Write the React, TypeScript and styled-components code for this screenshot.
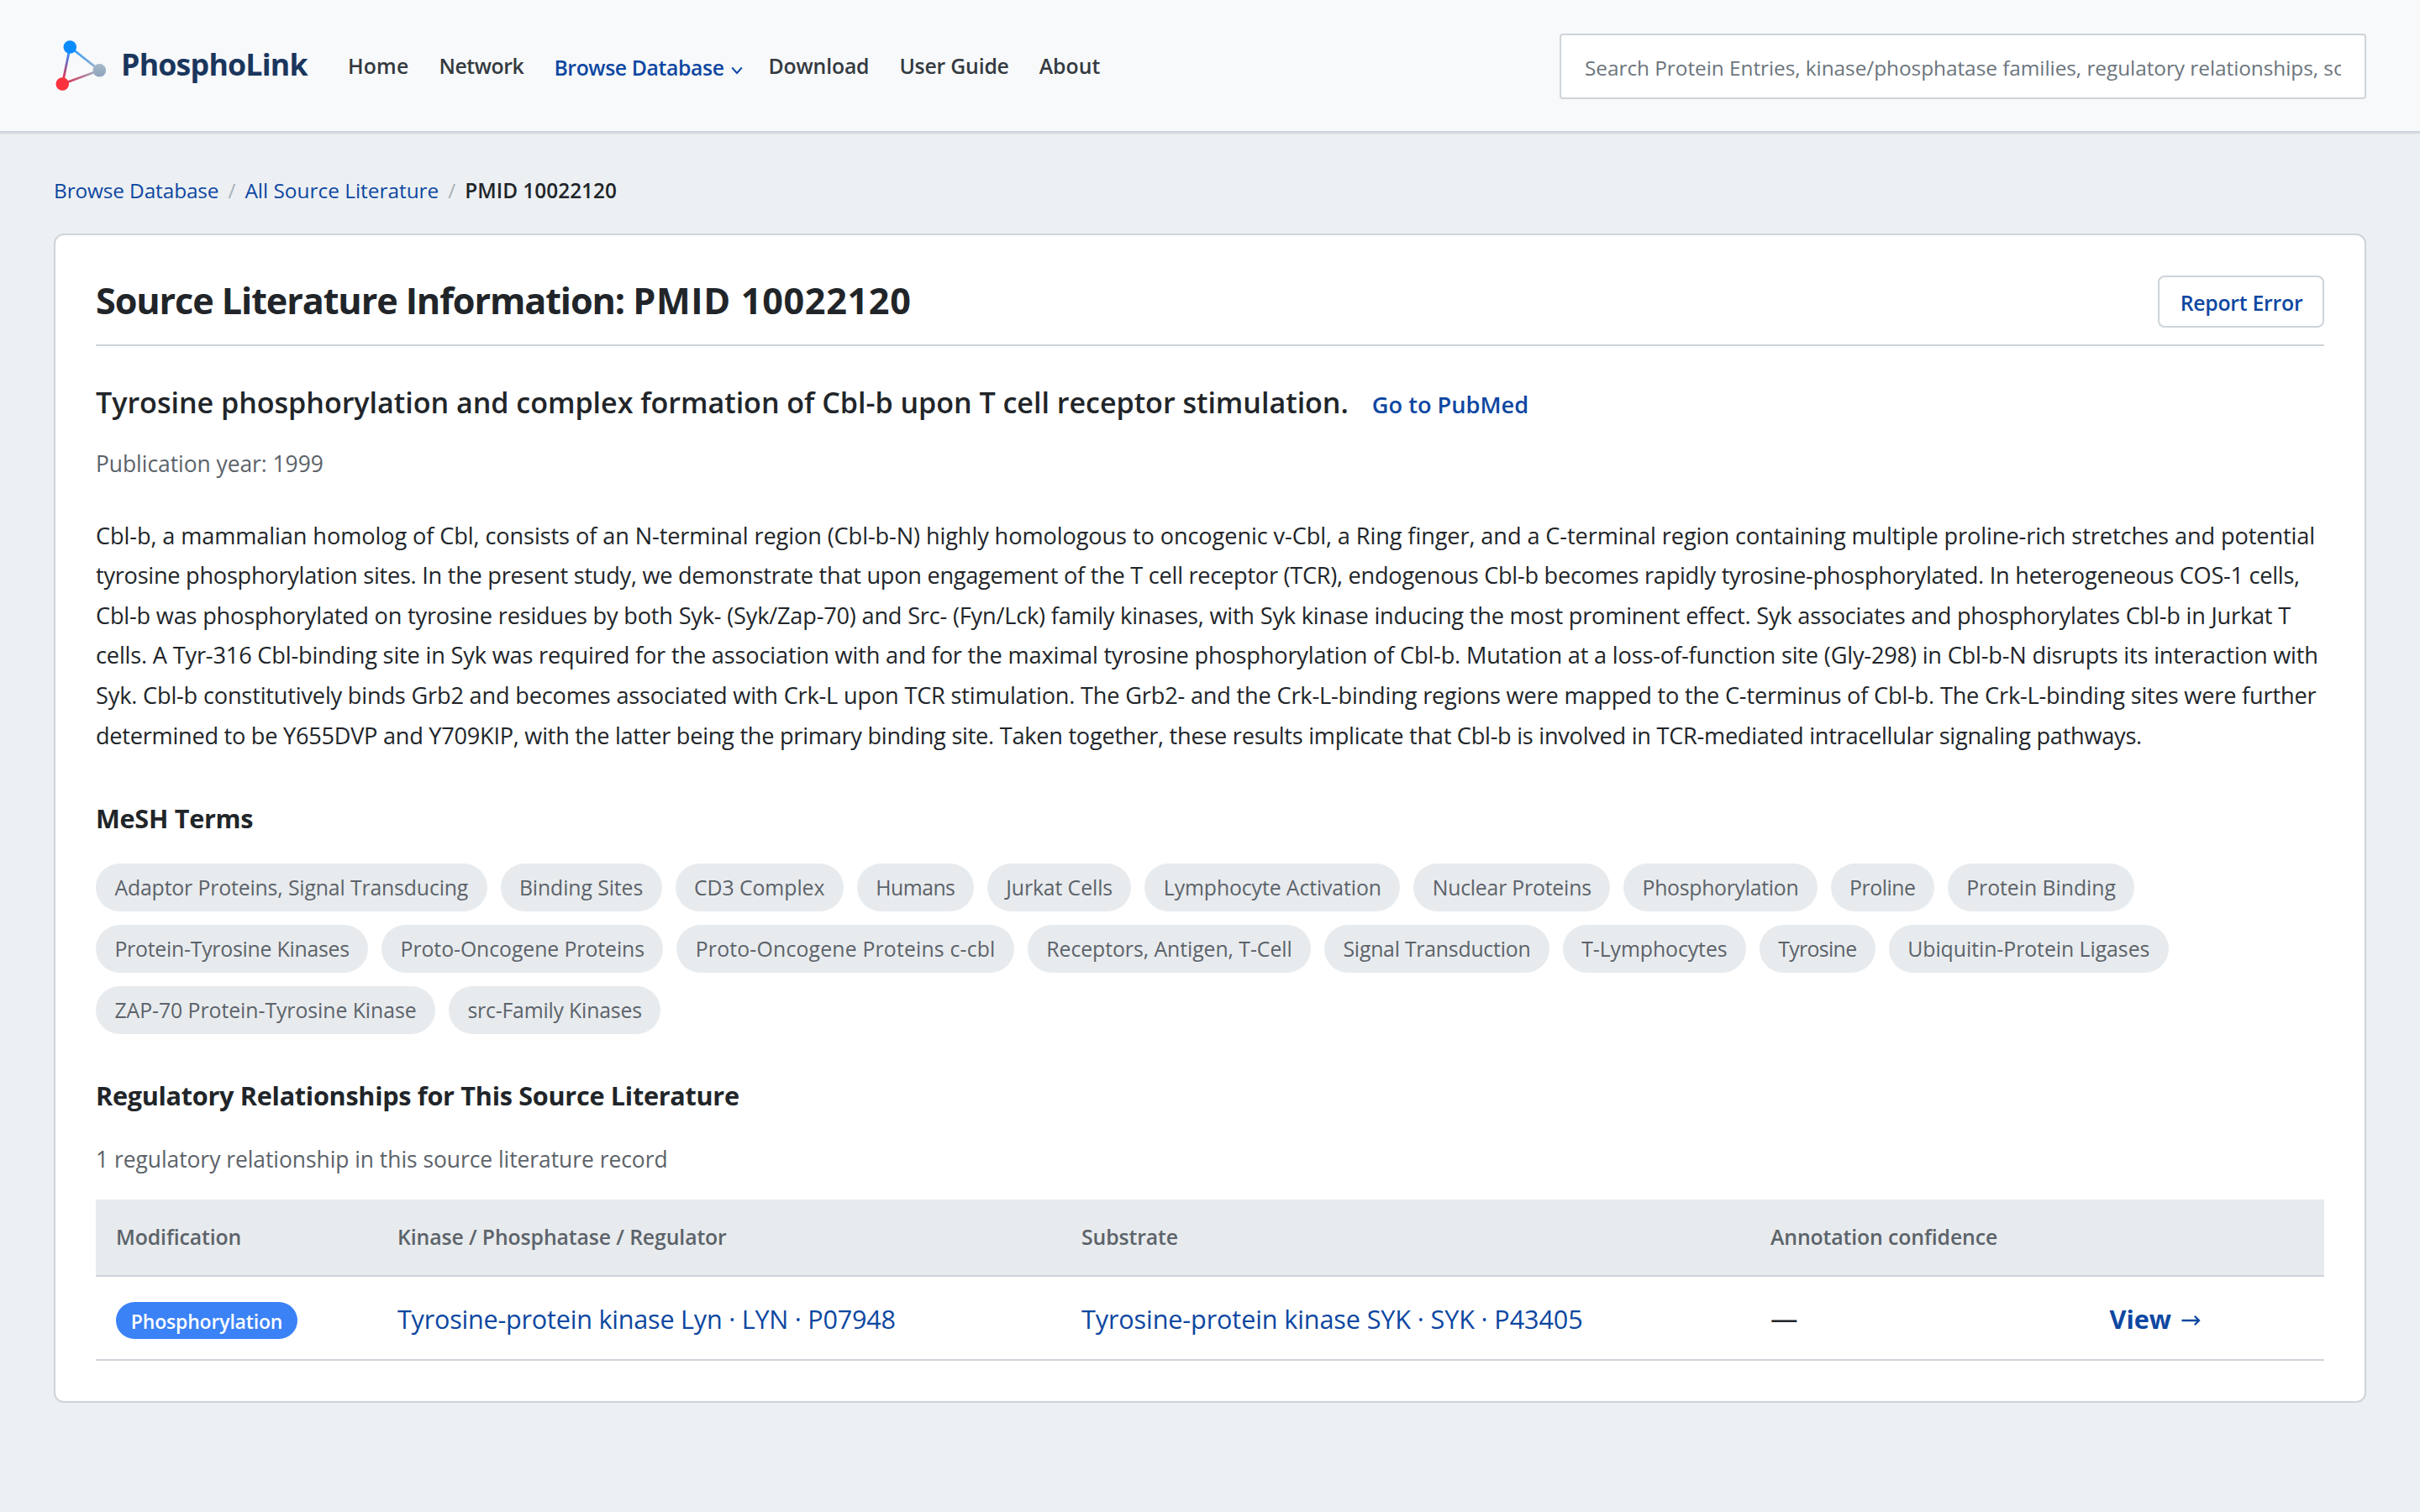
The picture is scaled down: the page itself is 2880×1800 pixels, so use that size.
import React from 'react';
import styled, { createGlobalStyle } from 'styled-components';

const color = {
  page: '#ecf0f3',
  surface: '#ffffff',
  header: '#f8f9fb',
  border: '#ced4da',
  ink: '#212529',
  nav: '#343a40',
  muted: '#5c636a',
  faint: '#a9b0b7',
  placeholder: '#6c757d',
  link: '#0d47a1',
  brand: '#1a365d',
  tint: '#e8ebee',
  phospho: '#3b82f6',
};

const GlobalStyle = createGlobalStyle`
  *, *::before, *::after { box-sizing: border-box; }
  body {
    margin: 0;
    min-height: 100vh;
    background: ${color.page};
    color: ${color.ink};
    font-family: "Open Sans", "Noto Sans", sans-serif;
  }
  h1, h2, h3, p { margin: 0; }
  a { color: ${color.link}; text-decoration: none; }
`;

const Header = styled.header`
  display: flex;
  align-items: center;
  height: 158px;
  padding: 0 64px;
  background: ${color.header};
  border-bottom: 2px solid ${color.border};
  box-shadow: 0 2px 0 rgba(0, 0, 0, 0.05);
`;

const Brand = styled.a`
  display: flex;
  align-items: center;
  gap: 16px;
  width: 350px;
`;

const LogoMark = styled.svg`
  flex: none;
  width: 64px;
  height: 64px;
`;

const BrandName = styled.span`
  padding-bottom: 4px;
  color: ${color.brand};
  font-size: 35.7px;
  font-weight: 700;
  letter-spacing: -0.78px;
  white-space: nowrap;
`;

const Nav = styled.nav`
  display: flex;
  align-items: center;
  gap: 36px;
  flex: 1;
`;

const NavLink = styled.a<{ $tracking?: number; $active?: boolean }>`
  display: flex;
  align-items: center;
  padding-top: ${(p) => (p.$active ? 4 : 0)}px;
  color: ${(p) => (p.$active ? color.link : color.nav)};
  font-size: 24.8px;
  font-weight: 600;
  line-height: 40px;
  letter-spacing: ${(p) => p.$tracking ?? 0}px;
  white-space: nowrap;
`;

const Chevron = styled.svg`
  width: 14px;
  height: 10px;
  margin: 7px -5px 0 8px;
`;

const Search = styled.input`
  width: 960px;
  height: 78px;
  margin-top: 2px;
  padding: 3px 28px 0 28px;
  background: ${color.surface};
  border: 2px solid ${color.border};
  border-radius: 4px;
  color: ${color.ink};
  font-family: inherit;
  font-size: 24.4px;
  letter-spacing: -0.05px;
  &::placeholder {
    color: ${color.placeholder};
    opacity: 1;
  }
`;

const Main = styled.main`
  padding: 48px 64px 0;
`;

const Breadcrumb = styled.nav`
  display: flex;
  gap: 11px;
  margin-bottom: 31px;
  font-size: 24.4px;
  line-height: 41px;
`;

const Crumb = styled.a<{ $tracking?: number }>`
  letter-spacing: ${(p) => p.$tracking ?? 0}px;
`;

const Separator = styled.span`
  color: ${color.faint};
`;

const Current = styled.span`
  font-weight: 600;
`;

const Card = styled.article`
  padding: 48px;
  background: ${color.surface};
  border: 2px solid ${color.border};
  border-radius: 12px;
`;

const CardHeader = styled.div`
  display: flex;
  align-items: flex-start;
  justify-content: space-between;
  padding-bottom: 20px;
  border-bottom: 2px solid ${color.border};
`;

const Title = styled.h1`
  height: 62px;
  font-size: 43.2px;
  font-weight: 700;
  line-height: 60px;
  letter-spacing: -1.1px;
`;

const TitleId = styled.span`
  letter-spacing: 0.65px;
`;

const ReportButton = styled.button`
  width: 198px;
  height: 62px;
  padding: 2px 0 0 1px;
  background: ${color.surface};
  border: 2px solid ${color.border};
  border-radius: 8px;
  color: ${color.link};
  font-family: inherit;
  font-size: 24.8px;
  font-weight: 600;
  letter-spacing: -0.25px;
`;

const ArticleTitle = styled.h2`
  margin-top: 42px;
  font-size: 34.1px;
  font-weight: 600;
  line-height: 50px;
  letter-spacing: -0.03px;
`;

const PubMedLink = styled.a`
  margin-left: 28px;
  font-size: 27.2px;
  line-height: 1;
  letter-spacing: 0;
`;

const Meta = styled.p<{ $top: number }>`
  margin-top: ${(p) => p.$top}px;
  color: ${color.muted};
  font-size: 26.4px;
  line-height: 44px;
  letter-spacing: -0.03px;
`;

const Abstract = styled.p`
  margin-top: 39.7px;
  font-size: 27.16px;
  line-height: 47.6px;
`;

const AbstractLine = styled.span<{ $tracking: number }>`
  display: block;
  letter-spacing: ${(p) => p.$tracking}px;
  white-space: nowrap;
`;

const SectionTitle = styled.h3<{ $top: number }>`
  margin-top: ${(p) => p.$top}px;
  font-size: 30.6px;
  font-weight: 700;
  line-height: 50px;
  letter-spacing: -0.28px;
`;

const Chips = styled.div`
  display: flex;
  flex-wrap: wrap;
  gap: 16px;
  margin-top: 29px;
`;

const Chip = styled.span<{ $tracking: number }>`
  padding: 8px 22.4px;
  background: ${color.tint};
  border-radius: 32px;
  color: ${color.muted};
  font-size: 24.8px;
  line-height: 40.96px;
  letter-spacing: ${(p) => p.$tracking}px;
`;

const Table = styled.table`
  width: 100%;
  margin-top: 26.2px;
  table-layout: fixed;
  border-collapse: separate;
  border-spacing: 0;
  text-align: left;
`;

const HeadCell = styled.th<{ $width?: number }>`
  width: ${(p) => (p.$width ? `${p.$width}px` : 'auto')};
  height: 92px;
  padding: 0 24px 1px;
  background: ${color.tint};
  border-bottom: 2px solid ${color.border};
  color: ${color.muted};
  font-size: 24.8px;
  font-weight: 600;
  line-height: 40px;
  letter-spacing: -0.11px;
`;

const Cell = styled.td<{ $tracking?: number }>`
  height: 100px;
  padding: 2px 24px 0;
  border-bottom: 2px solid ${color.border};
  font-size: 30.6px;
  line-height: 50px;
  letter-spacing: ${(p) => p.$tracking ?? 0}px;
  white-space: nowrap;
`;

const Badge = styled.span`
  display: flex;
  align-items: center;
  justify-content: center;
  width: 216px;
  height: 44px;
  margin-top: 4px;
  padding-top: 2px;
  background: ${color.phospho};
  border-radius: 22px;
  color: #ffffff;
  font-size: 23px;
  font-weight: 600;
  letter-spacing: -0.17px;
`;

const EmptyValue = styled.span`
  font-size: 32.6px;
`;

const ViewLink = styled.a`
  display: flex;
  align-items: center;
  gap: 12px;
  font-weight: 700;
`;

const ArrowIcon = styled.svg`
  width: 23px;
  height: 14px;
  margin-top: 5px;
`;

const Logo = () => (
  <LogoMark viewBox="0 0 64 64" fill="none">
    <defs>
      <linearGradient id="blueRed" x1="19.3" y1="10" x2="10.3" y2="54" gradientUnits="userSpaceOnUse">
        <stop offset="0.15" stopColor="#2f8cff" />
        <stop offset="0.85" stopColor="#e8334f" />
      </linearGradient>
      <linearGradient id="blueGrey" x1="19.3" y1="10" x2="54.3" y2="37.7" gradientUnits="userSpaceOnUse">
        <stop offset="0.1" stopColor="#2f9bff" />
        <stop offset="0.9" stopColor="#9cb4c8" />
      </linearGradient>
      <linearGradient id="redGrey" x1="10.3" y1="54" x2="54.3" y2="37.7" gradientUnits="userSpaceOnUse">
        <stop offset="0.15" stopColor="#d8385c" />
        <stop offset="0.85" stopColor="#a3a9c0" />
      </linearGradient>
      <linearGradient id="greyNode" x1="0" y1="0" x2="0" y2="1">
        <stop offset="0" stopColor="#a3b9ca" />
        <stop offset="1" stopColor="#8fa3bb" />
      </linearGradient>
    </defs>
    <path d="M19.3 10 10.3 54" stroke="url(#blueRed)" strokeWidth="2.8" />
    <path d="M19.3 10 54.3 37.7" stroke="url(#blueGrey)" strokeWidth="2.8" />
    <path d="M10.3 54 54.3 37.7" stroke="url(#redGrey)" strokeWidth="2.8" />
    <circle cx="19.3" cy="10" r="7.8" fill="#0a8cff" />
    <circle cx="54.3" cy="37.7" r="7.8" fill="url(#greyNode)" />
    <circle cx="10.3" cy="54" r="7.8" fill="#fb323d" />
  </LogoMark>
);

const abstractLines: [string, number][] = [
  ['Cbl-b, a mammalian homolog of Cbl, consists of an N-terminal region (Cbl-b-N) highly homologous to oncogenic v-Cbl, a Ring finger, and a C-terminal region containing multiple proline-rich stretches and potential', -0.1],
  ['tyrosine phosphorylation sites. In the present study, we demonstrate that upon engagement of the T cell receptor (TCR), endogenous Cbl-b becomes rapidly tyrosine-phosphorylated. In heterogeneous COS-1 cells,', -0.265],
  ['Cbl-b was phosphorylated on tyrosine residues by both Syk- (Syk/Zap-70) and Src- (Fyn/Lck) family kinases, with Syk kinase inducing the most prominent effect. Syk associates and phosphorylates Cbl-b in Jurkat T', -0.197],
  ['cells. A Tyr-316 Cbl-binding site in Syk was required for the association with and for the maximal tyrosine phosphorylation of Cbl-b. Mutation at a loss-of-function site (Gly-298) in Cbl-b-N disrupts its interaction with', -0.176],
  ['Syk. Cbl-b constitutively binds Grb2 and becomes associated with Crk-L upon TCR stimulation. The Grb2- and the Crk-L-binding regions were mapped to the C-terminus of Cbl-b. The Crk-L-binding sites were further', -0.183],
  ['determined to be Y655DVP and Y709KIP, with the latter being the primary binding site. Taken together, these results implicate that Cbl-b is involved in TCR-mediated intracellular signaling pathways.', -0.262],
];

const meshTerms: [string, number][] = [
  ['Adaptor Proteins, Signal Transducing', -0.14],
  ['Binding Sites', -0.1],
  ['CD3 Complex', -0.05],
  ['Humans', -0.5],
  ['Jurkat Cells', -0.1],
  ['Lymphocyte Activation', -0.1],
  ['Nuclear Proteins', -0.2],
  ['Phosphorylation', -0.28],
  ['Proline', -0.48],
  ['Protein Binding', -0.03],
  ['Protein-Tyrosine Kinases', -0.23],
  ['Proto-Oncogene Proteins', -0.07],
  ['Proto-Oncogene Proteins c-cbl', 0.18],
  ['Receptors, Antigen, T-Cell', -0.06],
  ['Signal Transduction', -0.22],
  ['T-Lymphocytes', -0.06],
  ['Tyrosine', -0.65],
  ['Ubiquitin-Protein Ligases', -0.04],
  ['ZAP-70 Protein-Tyrosine Kinase', -0.05],
  ['src-Family Kinases', -0.18],
];

export default function App() {
  return (
    <>
      <GlobalStyle />
      <Header>
        <Brand href="#">
          <Logo />
          <BrandName>PhosphoLink</BrandName>
        </Brand>
        <Nav>
          <NavLink href="#" $tracking={0.17}>Home</NavLink>
          <NavLink href="#" $tracking={-0.4}>Network</NavLink>
          <NavLink href="#" $tracking={-0.4} $active>
            Browse Database
            <Chevron viewBox="0 0 14 10" fill="none">
              <path d="M1.2 1.5 7 8 12.8 1.5" stroke="currentColor" strokeWidth="1.9" />
            </Chevron>
          </NavLink>
          <NavLink href="#" $tracking={-0.16}>Download</NavLink>
          <NavLink href="#" $tracking={-0.2}>User Guide</NavLink>
          <NavLink href="#">About</NavLink>
        </Nav>
        <Search placeholder="Search Protein Entries, kinase/phosphatase families, regulatory relationships, source literature" />
      </Header>
      <Main>
        <Breadcrumb>
          <Crumb href="#" $tracking={-0.12}>Browse Database</Crumb>
          <Separator>/</Separator>
          <Crumb href="#">All Source Literature</Crumb>
          <Separator>/</Separator>
          <Current>PMID 10022120</Current>
        </Breadcrumb>
        <Card>
          <CardHeader>
            <Title>
              Source Literature Information: <TitleId>PMID 10022120</TitleId>
            </Title>
            <ReportButton>Report Error</ReportButton>
          </CardHeader>
          <ArticleTitle>
            Tyrosine phosphorylation and complex formation of Cbl-b upon T cell receptor stimulation.
            <PubMedLink href="#">Go to PubMed</PubMedLink>
          </ArticleTitle>
          <Meta $top={26}>Publication year: 1999</Meta>
          <Abstract>
            {abstractLines.map(([line, tracking]) => (
              <AbstractLine key={line} $tracking={tracking}>
                {line}
              </AbstractLine>
            ))}
          </Abstract>
          <SectionTitle $top={49.8}>MeSH Terms</SectionTitle>
          <Chips>
            {meshTerms.map(([term, tracking]) => (
              <Chip key={term} $tracking={tracking}>
                {term}
              </Chip>
            ))}
          </Chips>
          <SectionTitle $top={48.2}>Regulatory Relationships for This Source Literature</SectionTitle>
          <Meta $top={28.7}>1 regulatory relationship in this source literature record</Meta>
          <Table>
            <thead>
              <tr>
                <HeadCell $width={335}>Modification</HeadCell>
                <HeadCell $width={814}>Kinase / Phosphatase / Regulator</HeadCell>
                <HeadCell $width={820}>Substrate</HeadCell>
                <HeadCell $width={403.5}>Annotation confidence</HeadCell>
                <HeadCell />
              </tr>
            </thead>
            <tbody>
              <tr>
                <Cell>
                  <Badge>Phosphorylation</Badge>
                </Cell>
                <Cell $tracking={-0.23}>
                  <a href="#">Tyrosine-protein kinase Lyn · LYN · P07948</a>
                </Cell>
                <Cell $tracking={-0.12}>
                  <a href="#">Tyrosine-protein kinase SYK · SYK · P43405</a>
                </Cell>
                <Cell>
                  <EmptyValue>—</EmptyValue>
                </Cell>
                <Cell>
                  <ViewLink href="#">
                    View
                    <ArrowIcon viewBox="0 0 23 14" fill="none">
                      <path d="M0.5 7H21M15.8 1.8 21 7 15.8 12.2" stroke="currentColor" strokeWidth="2.3" />
                    </ArrowIcon>
                  </ViewLink>
                </Cell>
              </tr>
            </tbody>
          </Table>
        </Card>
      </Main>
    </>
  );
}
